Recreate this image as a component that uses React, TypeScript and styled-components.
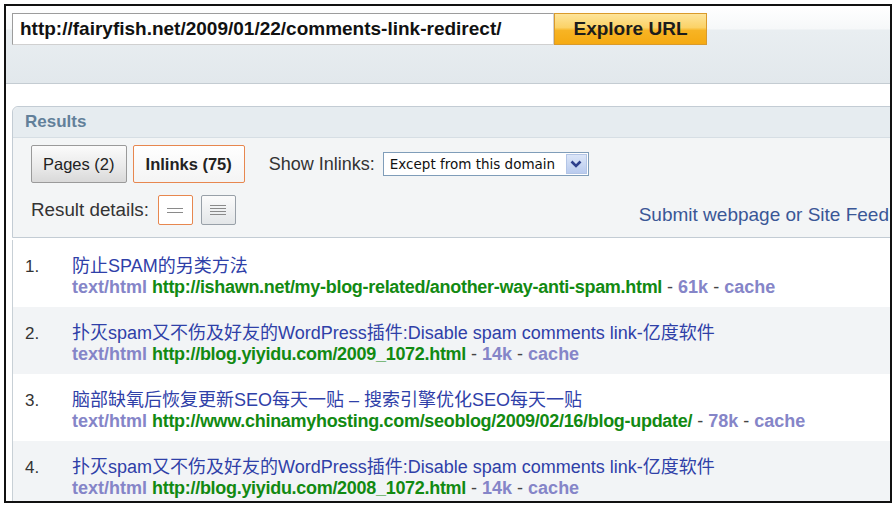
import styled, { createGlobalStyle } from 'styled-components';

const GlobalStyle = createGlobalStyle`
  html, body {
    margin: 0;
    padding: 0;
    background: #fff;
  }
  body {
    font-family: "Liberation Sans", Arial, "Noto Sans CJK SC", sans-serif;
    color: #333;
  }
`;

type Result = {
  title: string;
  url: string;
  size: string;
};

const results: Result[] = [
  {
    title: '防止SPAM的另类方法',
    url: 'http://ishawn.net/my-blog-related/another-way-anti-spam.html',
    size: '61k',
  },
  {
    title: '扑灭spam又不伤及好友的WordPress插件:Disable spam comments link-亿度软件',
    url: 'http://blog.yiyidu.com/2009_1072.html',
    size: '14k',
  },
  {
    title: '脑部缺氧后恢复更新SEO每天一贴 – 搜索引擎优化SEO每天一贴',
    url: 'http://www.chinamyhosting.com/seoblog/2009/02/16/blog-update/',
    size: '78k',
  },
  {
    title: '扑灭spam又不伤及好友的WordPress插件:Disable spam comments link-亿度软件',
    url: 'http://blog.yiyidu.com/2008_1072.html',
    size: '14k',
  },
];

function LinesIcon({ count }: { count: number }) {
  const gap = count > 2 ? 3 : 4;
  const h = (count - 1) * gap + 1;
  return (
    <svg width="16" height={h} viewBox={`0 0 16 ${h}`}>
      {Array.from({ length: count }).map((_, i) => (
        <rect key={i} x="0" y={i * gap} width="16" height="1" fill="#8a8a8a" />
      ))}
    </svg>
  );
}

function App() {
  return (
    <>
      <GlobalStyle />
      <Frame>
        <TopBar>
          <UrlInput readOnly value="http://fairyfish.net/2009/01/22/comments-link-redirect/" />
          <ExploreButton>Explore URL</ExploreButton>
        </TopBar>

        <Panel>
          <PanelHeader>Results</PanelHeader>
          <Controls>
            <ControlRow>
              <TabButton>Pages (2)</TabButton>
              <TabButton $active>Inlinks (75)</TabButton>
              <Label className="inlinks">Show Inlinks:</Label>
              <Select>
                <span>Except from this domain</span>
                <SelectArrow>
                  <svg width="12" height="9" viewBox="0 0 12 9">
                    <path d="M1.5 1.5 L6 6 L10.5 1.5" fill="none" stroke="#2d3f8c" strokeWidth="2.6" />
                  </svg>
                </SelectArrow>
              </Select>
            </ControlRow>
            <ControlRow>
              <Label className="details">Result details:</Label>
              <IconButton $active>
                <LinesIcon count={2} />
              </IconButton>
              <IconButton>
                <LinesIcon count={4} />
              </IconButton>
              <SubmitLink>Submit webpage or Site Feed</SubmitLink>
            </ControlRow>
          </Controls>
        </Panel>

        <List>
          {results.map((r, i) => (
            <Item key={i} $alt={i % 2 === 1}>
              <Num>{i + 1}.</Num>
              <div>
                <Title>{r.title}</Title>
                <Meta>
                  <span className="type">text/html</span>{' '}
                  <span className="url">{r.url}</span> -{' '}
                  <span className="type">{r.size}</span> -{' '}
                  <span className="type">cache</span>
                </Meta>
              </div>
            </Item>
          ))}
        </List>
      </Frame>
    </>
  );
}

const Frame = styled.div`
  margin: 4px 0 0 4px;
  width: 884px;
  height: 495px;
  border: 2px solid #111;
  overflow: hidden;
  background: #fff;
`;

const TopBar = styled.div`
  display: flex;
  align-items: flex-start;
  height: 70px;
  padding: 7px 0 0 6px;
  background: linear-gradient(#ffffff 0, #f6f8f9 23px, #e9eef1 24px, #e2e8ec 77px);
  border-bottom: 1px solid #c4ccd2;
`;

const UrlInput = styled.input`
  box-sizing: border-box;
  width: 542px;
  height: 32px;
  padding: 0 0 0 7px;
  border: 1px solid #9c9c9c;
  border-right-color: #d0d0d0;
  border-bottom-color: #d0d0d0;
  font-family: "Liberation Sans", Arial, sans-serif;
  font-weight: bold;
  font-size: 19px;
  color: #111;
  background: #fff;
  outline: none;
`;

const ExploreButton = styled.button`
  box-sizing: border-box;
  width: 153px;
  height: 32px;
  margin: 0;
  padding: 0 0 1px;
  border: 1px solid #d99a2b;
  background: linear-gradient(#fde49a 0, #fbd267 45%, #f7b424 55%, #f5aa12 100%);
  font-family: "Liberation Sans", Arial, sans-serif;
  font-weight: bold;
  font-size: 19px;
  color: #1c1c1c;
`;

const Panel = styled.div`
  margin: 22px -10px 0 6px;
  border: 1px solid #c3ccd4;
  border-top-left-radius: 6px;
  background: #f3f5f6;
`;

const PanelHeader = styled.div`
  height: 30px;
  line-height: 30px;
  padding-left: 12px;
  background: #e6ecf0;
  border-top-left-radius: 6px;
  border-bottom: 1px solid #d6dee4;
  font-weight: bold;
  font-size: 17px;
  color: #62809a;
`;

const Controls = styled.div`
  display: flex;
  flex-direction: column;
  gap: 12px;
  padding: 7px 10px 12px 18px;
`;

const ControlRow = styled.div`
  display: flex;
  align-items: center;
  gap: 6px;
`;

const TabButton = styled.div<{ $active?: boolean }>`
  box-sizing: border-box;
  height: 38px;
  padding: 0 ${(p) => (p.$active ? '12px' : '11px')};
  display: flex;
  align-items: center;
  border: 1px solid ${(p) => (p.$active ? '#e7874f' : '#9a9a9a')};
  border-radius: 2px;
  background: ${(p) =>
    p.$active ? 'linear-gradient(#ffffff, #f4f4f4)' : 'linear-gradient(#fbfbfb, #e9e9e9 60%, #d9d9d9)'};
  font-size: 16.5px;
  font-weight: ${(p) => (p.$active ? 'bold' : 'normal')};
  color: #222;
`;

const Label = styled.span`
  font-size: 18px;
  color: #333;
  margin-right: 3px;

  &.inlinks {
    margin-left: 18px;
    margin-right: 2px;
  }

  &.details {
    font-size: 18.8px;
    margin-right: 3px;
  }
`;

const Select = styled.div`
  box-sizing: border-box;
  width: 206px;
  height: 24px;
  display: flex;
  align-items: center;
  justify-content: space-between;
  padding: 0 1px 0 6px;
  border: 1px solid #7f9db9;
  background: #fff;
  font-family: "DejaVu Sans", Verdana, sans-serif;
  font-size: 13.5px;
  color: #111;
`;

const SelectArrow = styled.div`
  width: 21px;
  height: 20px;
  display: flex;
  align-items: center;
  justify-content: center;
  background: linear-gradient(#dbe6f8, #b9cbee);
  border: 1px solid #b3c5e6;
  box-sizing: border-box;
`;

const IconButton = styled.div<{ $active?: boolean }>`
  box-sizing: border-box;
  width: 35px;
  height: 30px;
  margin-left: ${(p) => (p.$active ? '0' : '2px')};
  display: flex;
  align-items: center;
  justify-content: center;
  border: 1px solid ${(p) => (p.$active ? '#e7874f' : '#98a0a8')};
  border-radius: 2px;
  background: ${(p) => (p.$active ? '#fff' : 'linear-gradient(#fbfbfb, #e3e6e8)')};
`;

const SubmitLink = styled.span`
  margin-left: auto;
  align-self: flex-end;
  margin-bottom: -1px;
  font-size: 19px;
  color: #3a5796;
`;

const List = styled.div`
  margin: 2px -10px 0 6px;
  border-left: 1px solid #c8d0d6;
`;

const Item = styled.div<{ $alt?: boolean }>`
  display: grid;
  grid-template-columns: 47px 1fr;
  padding: 16px 0 9px 12px;
  background: ${(p) => (p.$alt ? '#f2f4f6' : '#fff')};
  line-height: 21px;
  font-size: 18px;
`;

const Num = styled.span`
  font-size: 17px;
  color: #333;
`;

const Title = styled.div`
  color: #2f40a8;
  white-space: nowrap;
`;

const Meta = styled.div`
  white-space: nowrap;
  color: #444;

  .type {
    font-weight: bold;
    color: #8585c8;
  }

  .url {
    font-weight: bold;
    color: #128a12;
    letter-spacing: -0.3px;
  }
`;

export default App;
